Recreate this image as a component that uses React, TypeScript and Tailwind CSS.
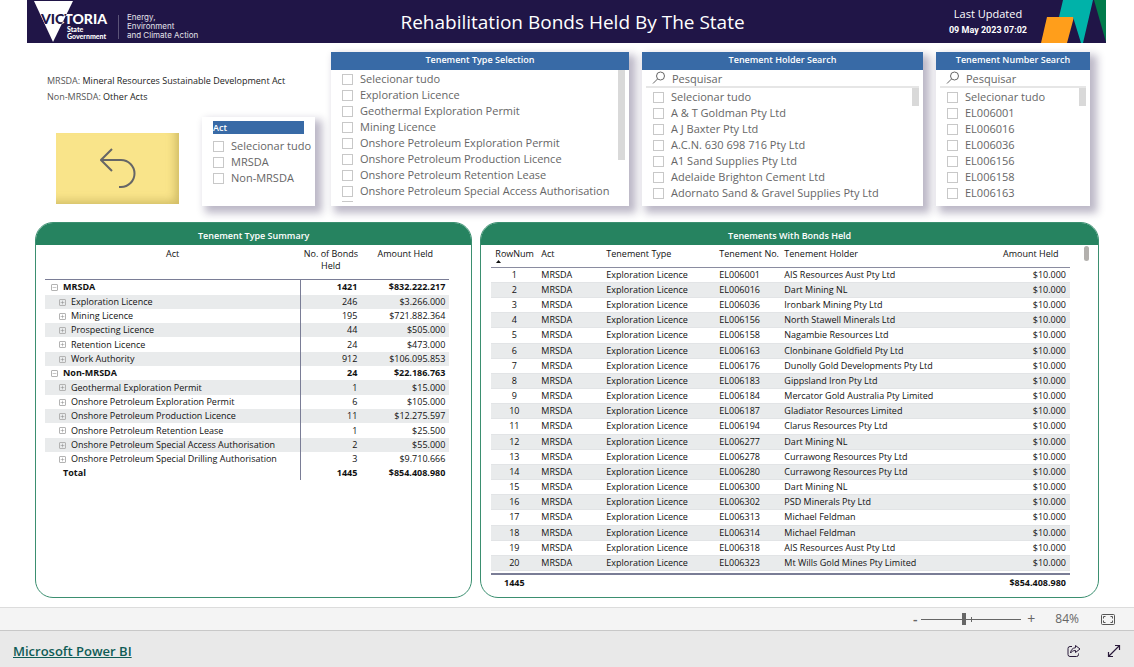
import { Minus, Plus } from 'lucide-react';

const tenementTypes = [
    'Selecionar tudo',
    'Exploration Licence',
    'Geothermal Exploration Permit',
    'Mining Licence',
    'Onshore Petroleum Exploration Permit',
    'Onshore Petroleum Production Licence',
    'Onshore Petroleum Retention Lease',
    'Onshore Petroleum Special Access Authorisation',
];

const holders = [
    'Selecionar tudo',
    'A & T Goldman Pty Ltd',
    'A J Baxter Pty Ltd',
    'A.C.N. 630 698 716 Pty Ltd',
    'A1 Sand Supplies Pty Ltd',
    'Adelaide Brighton Cement Ltd',
    'Adornato Sand & Gravel Supplies Pty Ltd',
];

const numbers = ['Selecionar tudo', 'EL006001', 'EL006016', 'EL006036', 'EL006156', 'EL006158', 'EL006163'];

const summary = [
    { name: 'MRSDA', bonds: '1421', amount: '$832.222.217', group: true },
    { name: 'Exploration Licence', bonds: '246', amount: '$3.266.000' },
    { name: 'Mining Licence', bonds: '195', amount: '$721.882.364' },
    { name: 'Prospecting Licence', bonds: '44', amount: '$505.000' },
    { name: 'Retention Licence', bonds: '24', amount: '$473.000' },
    { name: 'Work Authority', bonds: '912', amount: '$106.095.853' },
    { name: 'Non-MRSDA', bonds: '24', amount: '$22.186.763', group: true },
    { name: 'Geothermal Exploration Permit', bonds: '1', amount: '$15.000' },
    { name: 'Onshore Petroleum Exploration Permit', bonds: '6', amount: '$105.000' },
    { name: 'Onshore Petroleum Production Licence', bonds: '11', amount: '$12.275.597' },
    { name: 'Onshore Petroleum Retention Lease', bonds: '1', amount: '$25.500' },
    { name: 'Onshore Petroleum Special Access Authorisation', bonds: '2', amount: '$55.000' },
    { name: 'Onshore Petroleum Special Drilling Authorisation', bonds: '3', amount: '$9.710.666' },
];

const tenements = [
    ['EL006001', 'AIS Resources Aust Pty Ltd'],
    ['EL006016', 'Dart Mining NL'],
    ['EL006036', 'Ironbark Mining Pty Ltd'],
    ['EL006156', 'North Stawell Minerals Ltd'],
    ['EL006158', 'Nagambie Resources Ltd'],
    ['EL006163', 'Clonbinane Goldfield Pty Ltd'],
    ['EL006176', 'Dunolly Gold Developments Pty Ltd'],
    ['EL006183', 'Gippsland Iron Pty Ltd'],
    ['EL006184', 'Mercator Gold Australia Pty Limited'],
    ['EL006187', 'Gladiator Resources Limited'],
    ['EL006194', 'Clarus Resources Pty Ltd'],
    ['EL006277', 'Dart Mining NL'],
    ['EL006278', 'Currawong Resources Pty Ltd'],
    ['EL006280', 'Currawong Resources Pty Ltd'],
    ['EL006300', 'Dart Mining NL'],
    ['EL006302', 'PSD Minerals Pty Ltd'],
    ['EL006313', 'Michael Feldman'],
    ['EL006314', 'Michael Feldman'],
    ['EL006318', 'AIS Resources Aust Pty Ltd'],
    ['EL006323', 'Mt Wills Gold Mines Pty Limited'],
];

const Logo = () => (
    <svg width="180" height="43" viewBox="0 0 180 43" role="img" aria-label="Victoria State Government" className="ml-[7px] shrink-0">
        <defs>
            <clipPath id="triangle">
                <path d="M0 1h39L19 42z" />
            </clipPath>
        </defs>
        <path d="M0 1h39L19 42z" fill="#fff" />
        <g fontFamily="Lato, sans-serif" fontWeight="900">
            <text x="7" y="24" fontSize="14" fill="#fff">VICTORIA</text>
            <text x="7" y="24" fontSize="14" fill="#201547" clipPath="url(#triangle)">VICTORIA</text>
            <g fontSize="7" fill="#fff">
                <text x="33" y="32">State</text>
                <text x="33" y="39">Government</text>
            </g>
        </g>
        <path d="M84.500 15v24" stroke="#5b5378" />
        <g fontFamily="Inter, sans-serif" fontSize="8" fill="#e4e2ea">
            <text x="93" y="20">Energy,</text>
            <text x="93" y="29">Environment</text>
            <text x="93" y="38">and Climate Action</text>
        </g>
    </svg>
);

const Header = () => (
    <header className="flex h-[43px] items-center bg-[#201547] text-white">
        <div className="flex-1">
            <Logo />
        </div>
        <h1 className="pt-px pl-3 text-[19px] leading-6 whitespace-nowrap">Rehabilitation Bonds Held By The State</h1>
        <div className="flex flex-1 items-center justify-end gap-[14px]">
            <div className="text-center">
                <p className="text-[11px] leading-4">Last Updated</p>
                <p className="font-[Roboto] text-[9px] leading-4 font-bold">09 May 2023 07:02</p>
            </div>
            <svg width="65" height="43" viewBox="0 0 65 43" aria-hidden="true">
                <path d="M6 17h27l-7 26H0z" fill="#ff9e1b" />
                <path d="M22 0h30L42 43h-2L32 17H18z" fill="#00b2a9" />
                <path d="M53 0h12v42z" fill="#007b4b" />
            </svg>
        </div>
    </header>
);

const checkbox = 'size-[11px] shrink-0 appearance-none border border-[#c8c8c8] bg-white';

const Options = ({ items }: { items: string[] }) => (
    <ul>
        {items.map((item) => (
            <li key={item}>
                <label className="flex h-4 items-center gap-[7px] text-[11px] leading-4 whitespace-nowrap text-[#666]">
                    <input type="checkbox" className={checkbox} />
                    {item}
                </label>
            </li>
        ))}
    </ul>
);

const cardShadow = 'bg-white shadow-[5px_5px_8px_2px_rgba(32,21,71,0.3)]';

const SlicerTitle = ({ title }: { title: string }) => (
    <h2 className="h-[18px] bg-[#386aa6] text-center text-[9px] leading-4 font-semibold text-white">{title}</h2>
);

const SearchSlicer = ({ title, items, className }: { title: string; items: string[]; className: string }) => (
    <section className={`${cardShadow} ${className}`}>
        <SlicerTitle title={title} />
        <label className="mx-1 flex h-[18px] items-center gap-[6px] border-b-2 border-[#e6e6e6] pl-[6px]">
            <svg width="14" height="14" viewBox="0 0 14 14" fill="none" stroke="#666" className="shrink-0" aria-hidden="true">
                <circle cx="8.500" cy="5" r="4" />
                <path d="M5.500 8 1 12.500" />
            </svg>
            <input
                type="text"
                placeholder="Pesquisar"
                aria-label={title}
                className="w-full min-w-0 pt-[2px] text-[11px] leading-4 outline-none placeholder:text-[#666]"
            />
        </label>
        <div className="mr-1 flex justify-between pl-[11px]">
            <div className="pt-px">
                <Options items={items} />
            </div>
            <div className="h-[18px] w-[7px] bg-[#d9d9d9]" />
        </div>
    </section>
);

const Expander = ({ open, name }: { open?: boolean; name: string }) => (
    <button type="button" aria-label={`Toggle ${name}`} className="flex size-[7px] shrink-0 items-center justify-center rounded-[1px] border border-[#b3b3b3] text-[#777]">
        {open ? <Minus size={5} /> : <Plus size={5} />}
    </button>
);

const PanelTitle = ({ title }: { title: string }) => (
    <h2 className="h-[22px] bg-[#268360] pt-[5px] text-center text-[9px] leading-4 font-semibold text-white">{title}</h2>
);

const SummaryPanel = () => (
    <section className="flex-[437] overflow-hidden rounded-[18px] border border-[#3b8f70]">
        <PanelTitle title="Tenement Type Summary" />
        <div className="pr-[22px] pl-[9px]">
            <table className="w-full table-fixed border-collapse text-[9px] leading-[14px] text-[#111]">
                <colgroup>
                    <col />
                    <col className="w-[61px]" />
                    <col className="w-[88px]" />
                </colgroup>
                <thead>
                    <tr className="h-[34px] border-b border-[#7a7d96] align-top leading-3">
                        <th className="pt-[3px] font-normal">Act</th>
                        <th className="pt-[3px] font-normal">No. of Bonds Held</th>
                        <th className="pt-[3px] font-normal">Amount Held</th>
                    </tr>
                </thead>
                <tbody>
                    {summary.map((row, i) => (
                        <tr
                            key={row.name}
                            className={`${row.group ? 'font-bold' : ''} ${i === 0 ? 'h-4' : i > 1 && i % 3 === 1 ? 'h-[15px]' : 'h-[14px]'} ${i % 2 === 1 ? 'bg-[#e9ebec]' : ''}`}
                        >
                            <td className="border-r border-[#7a7d96]">
                                <div className={`flex items-center gap-[5px] whitespace-nowrap ${row.group ? 'pl-[6px]' : 'pl-[14px]'}`}>
                                    <Expander open={row.group} name={row.name} />
                                    {row.name}
                                </div>
                            </td>
                            <td className="pr-1 text-right">{row.bonds}</td>
                            <td className="pr-1 text-right">{row.amount}</td>
                        </tr>
                    ))}
                </tbody>
                <tfoot>
                    <tr className="h-[14px] font-bold">
                        <td className="border-r border-[#7a7d96] pl-[18px]">Total</td>
                        <td className="pr-1 text-right">1445</td>
                        <td className="pr-1 text-right">$854.408.980</td>
                    </tr>
                </tfoot>
            </table>
        </div>
    </section>
);

const TenementsPanel = () => (
    <section className="flex-[619] overflow-hidden rounded-[18px] border border-[#3b8f70]">
        <PanelTitle title="Tenements With Bonds Held" />
        <div className="flex justify-between pr-[9px] pl-[10px]">
            <table className="mr-[14px] w-full table-fixed border-collapse text-[9px] leading-[14px] whitespace-nowrap text-[#111]">
                <colgroup>
                    <col className="w-[46px]" />
                    <col className="w-[65px]" />
                    <col className="w-[113px]" />
                    <col className="w-[65px]" />
                    <col />
                    <col className="w-[71px]" />
                </colgroup>
                <thead>
                    <tr className="h-[22px] border-b border-[#8a8ca0] text-left align-top leading-3">
                        <th className="pt-[3px] pl-1 font-normal">
                            RowNum
                            <svg width="5" height="3" viewBox="0 0 5 3" className="ml-px" aria-hidden="true">
                                <path d="M0 3 2.500 0 5 3z" fill="#111" />
                            </svg>
                        </th>
                        <th className="pt-[3px] pl-1 font-normal">Act</th>
                        <th className="pt-[3px] pl-1 font-normal">Tenement Type</th>
                        <th className="pt-[3px] pl-1 font-normal">Tenement No.</th>
                        <th className="pt-[3px] pl-1 font-normal">Tenement Holder</th>
                        <th className="pt-[3px] pl-1 font-normal">Amount Held</th>
                    </tr>
                </thead>
                <tbody>
                    {tenements.map(([number, holder], i) => (
                        <tr key={number} className={`border-b border-[#e2e4e6] ${i % 6 === 4 ? 'h-4' : 'h-[15px]'} ${i % 2 === 1 ? 'bg-[#e9ebec]' : ''}`}>
                            <td className="text-center">{i + 1}</td>
                            <td className="pl-1">MRSDA</td>
                            <td className="pl-1">Exploration Licence</td>
                            <td className="pl-1">{number}</td>
                            <td className="pl-1">{holder}</td>
                            <td className="pr-1 text-right">$10.000</td>
                        </tr>
                    ))}
                    <tr className="h-1">
                        <td colSpan={6} />
                    </tr>
                </tbody>
                <tfoot>
                    <tr className="h-4 border-t-2 border-[#7a7d96] font-bold">
                        <td className="text-center">1445</td>
                        <td colSpan={4} />
                        <td className="pr-1 text-right">$854.408.980</td>
                    </tr>
                </tfoot>
            </table>
            <div className="mt-px h-[15px] w-[5px] shrink-0 rounded-full bg-[#b3b0ad]" />
        </div>
    </section>
);

const App = () => {
    return (
        <div className="flex min-h-screen flex-col bg-white font-['Open_Sans',sans-serif]">
            <main className="flex flex-1 flex-col pr-7 pl-[27px]">
                <Header />

                <div className="mt-[9px] flex h-[154px] gap-[13px] pr-4">
                    <div className="flex w-[291px] shrink-0 flex-col justify-between">
                        <div className="pt-[21px] pl-5 text-[9px] leading-4 text-[#222]">
                            <p><span className="text-[#555]">MRSDA:</span> Mineral Resources Sustainable Development Act</p>
                            <p><span className="text-[#555]">Non-MRSDA:</span> Other Acts</p>
                        </div>
                        <div className="flex items-end justify-between pr-[3px] pl-[29px]">
                            <button
                                type="button"
                                aria-label="Back"
                                className="mb-[2px] flex h-[71px] w-[123px] items-center justify-center bg-[#f9e48a] shadow-[inset_-6px_-5px_8px_-2px_rgba(150,130,50,0.4)]"
                            >
                                <svg width="36" height="42" viewBox="0 0 36 42" fill="none" stroke="#666" strokeWidth="2" aria-hidden="true">
                                    <path d="M12 1 1 12l11 11M1 12h20a13.500 13.500 0 0 1 0 27h-2" />
                                </svg>
                            </button>
                            <section className={`h-[89px] w-[113px] pt-1 pr-[6px] pl-[11px] ${cardShadow}`}>
                                <h2 className="mr-[5px] mb-1 h-[13px] bg-[#386aa6] text-[9px] leading-[14px] font-semibold text-white">Act</h2>
                                <Options items={['Selecionar tudo', 'MRSDA', 'Non-MRSDA']} />
                            </section>
                        </div>
                    </div>

                    <section className={`min-w-0 flex-[298] ${cardShadow}`}>
                        <SlicerTitle title="Tenement Type Selection" />
                        <div className="mr-1 flex h-[132px] justify-between overflow-hidden pl-[11px]">
                            <div className="pt-px">
                                <Options items={tenementTypes} />
                                {/* next option, scrolled out of view */}
                                <input type="checkbox" aria-label="Onshore Petroleum Special Drilling Authorisation" className={`mt-[2px] block ${checkbox}`} />
                            </div>
                            <div className="h-[90px] w-[7px] bg-[#d9d9d9]" />
                        </div>
                    </section>
                    <SearchSlicer title="Tenement Holder Search" items={holders} className="min-w-0 flex-[281]" />
                    <SearchSlicer title="Tenement Number Search" items={numbers} className="min-w-0 flex-[154]" />
                </div>

                <div className="mt-4 mb-[9px] flex flex-1 gap-2 pr-[7px] pl-2">
                    <SummaryPanel />
                    <TenementsPanel />
                </div>
            </main>

            <div className="flex h-[23px] items-center justify-end border-t border-[#dcdcdc] bg-[#f4f4f4] pr-[19px] text-[#666]">
                <button type="button" aria-label="Zoom out" className="w-3 text-[14px] leading-5 font-semibold">-</button>
                <div className="relative mr-1 flex w-[100px] items-center">
                    <input
                        type="range"
                        aria-label="Zoom"
                        min={0}
                        max={100}
                        defaultValue={42}
                        className="h-3 w-full appearance-none bg-[linear-gradient(#666,#666)] bg-[length:100%_1px] bg-center bg-no-repeat [&::-webkit-slider-thumb]:h-3 [&::-webkit-slider-thumb]:w-1 [&::-webkit-slider-thumb]:appearance-none [&::-webkit-slider-thumb]:bg-[#666]"
                    />
                    <span className="absolute left-1/2 h-[5px] w-px bg-[#666]" />
                </div>
                <button type="button" aria-label="Zoom in" className="w-3 text-[14px] leading-5">+</button>
                <span className="ml-[18px] text-[12px] leading-5">84%</span>
                <button type="button" aria-label="Fit to page" className="ml-[22px]">
                    <svg width="14" height="11" viewBox="0 0 14 11" fill="none" stroke="#555" aria-hidden="true">
                        <rect x=".5" y=".5" width="13" height="10" rx="1" />
                        <path d="M2.500 4.500v-2h2M9.500 2.500h2v2M11.500 6.500v2h-2M4.500 8.500h-2v-2" />
                    </svg>
                </button>
            </div>

            <footer className="flex h-[37px] items-center justify-between border-t border-[#c8c8c8] bg-[#e9e9e9] pt-1 pr-[13px] pl-[13px]">
                <a href="#" className="text-[13px] leading-5 font-semibold text-[#0f5c56] underline">Microsoft Power BI</a>
                <div className="flex items-center gap-[26px] text-[#2a1a3a]">
                    <button type="button" aria-label="Share">
                        <svg width="14" height="14" viewBox="0 0 14 14" fill="none" stroke="currentColor" strokeLinejoin="round" aria-hidden="true">
                            <path d="M5 2.500H3a2 2 0 0 0-2 2v6a2 2 0 0 0 2 2h6.500a2 2 0 0 0 2-2V9.500" />
                            <path d="M8.500 1.500 13 5 8.500 8.500v-2C6 6.500 4.700 7.500 3.500 9c.3-3 2-5 5-5.300z" />
                        </svg>
                    </button>
                    <button type="button" aria-label="Full screen">
                        <svg width="14" height="14" viewBox="0 0 14 14" fill="none" stroke="currentColor" strokeWidth="1.2" aria-hidden="true">
                            <path d="M1.500 12.500 12.500 1.500M8 1.500h4.500V6M1.500 8v4.500H6" />
                        </svg>
                    </button>
                </div>
            </footer>
        </div>
    );
};

export default App;
